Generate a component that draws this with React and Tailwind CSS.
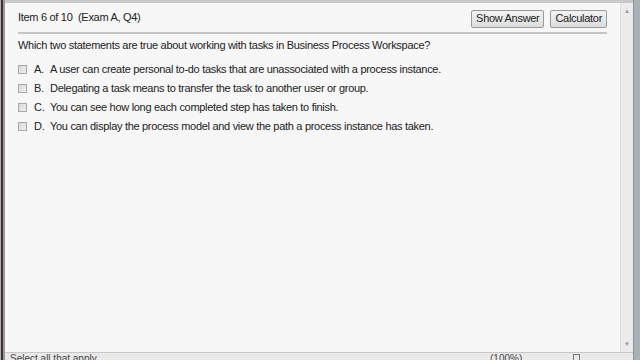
import React from "react";

const options = [
  ["A.", "A user can create personal to-do tasks that are unassociated with a process instance."],
  ["B.", "Delegating a task means to transfer the task to another user or group."],
  ["C.", "You can see how long each completed step has taken to finish."],
  ["D.", "You can display the process model and view the path a process instance has taken."],
];

export default function App() {
  return (
    <div className="w-[640px] h-[360px] flex overflow-hidden bg-[#f7f7f7] text-[#222]" style={{ fontFamily: '"Liberation Sans", Arial, sans-serif' }}>
      <div className="w-[5px] h-full flex">
        <div className="w-[1px] bg-[#b9a9a9]" />
        <div className="w-[2px] bg-[#3a3535]" />
        <div className="w-[2px] bg-[#9a9a9a]" />
      </div>
      <div className="flex-1 flex flex-col">
        <div className="h-[3px] bg-[#c9c9c9]" />
        <div className="flex-1 flex min-h-0">
          <div className="flex-1 px-[13px] flex flex-col">
            <div className="flex items-center justify-between h-[31px] border-b-2 border-[#c4c4c4] pt-[2px]">
              <span className="text-[11px] tracking-[-0.3px] leading-none whitespace-pre pb-[2px]">Item 6 of 10  (Exam A, Q4)</span>
              <div className="flex gap-[6px]">
                <button className="h-[18px] px-[4px] text-[11px] tracking-[-0.3px] leading-none border border-[#9a9a9a] rounded-[2px] bg-gradient-to-b from-[#f4f4f4] to-[#dcdcdc]">Show Answer</button>
                <button className="h-[18px] px-[4px] text-[11px] tracking-[-0.3px] leading-none border border-[#9a9a9a] rounded-[2px] bg-gradient-to-b from-[#f4f4f4] to-[#dcdcdc]">Calculator</button>
              </div>
            </div>
            <div className="text-[11px] tracking-[-0.3px] leading-none mt-[6px]">Which two statements are true about working with tasks in Business Process Workspace?</div>
            <div className="mt-[12px] flex flex-col gap-[7px]">
              {options.map(([l, t]) => (
                <div key={l} className="flex items-center h-[12px] text-[11px] tracking-[-0.3px] leading-none">
                  <div className="w-[9px] h-[9px] border border-[#a8a8a8] bg-gradient-to-br from-[#d8d8d8] to-[#f0f0f0]" />
                  <span className="ml-[7px] w-[16px]">{l}</span>
                  <span>{t}</span>
                </div>
              ))}
            </div>
          </div>
          <div className="w-[13px] bg-[#ececec] border-l border-[#e0e0e0] flex flex-col items-center justify-between py-[5px] text-[#9a9a9a] text-[6px] leading-none">
            <span>▲</span>
            <span>▼</span>
          </div>
        </div>
        <div className="h-[8px] bg-[#e9e9e9] border-t border-[#c8c8c8] overflow-hidden relative text-[10px] text-[#444]">
          <span className="absolute left-[5px] top-[1px] leading-none">Select all that apply</span>
          <span className="absolute left-[485px] top-[1px] leading-none">(100%)</span>
          <span className="absolute left-[568px] top-[1px] w-[7px] h-[8px] border border-[#777]" />
        </div>
      </div>
      <div className="w-[7px] h-full flex">
        <div className="w-[1px] bg-[#8a8f96]" />
        <div className="w-[6px] bg-[#a9b0b8]" />
      </div>
    </div>
  );
}
